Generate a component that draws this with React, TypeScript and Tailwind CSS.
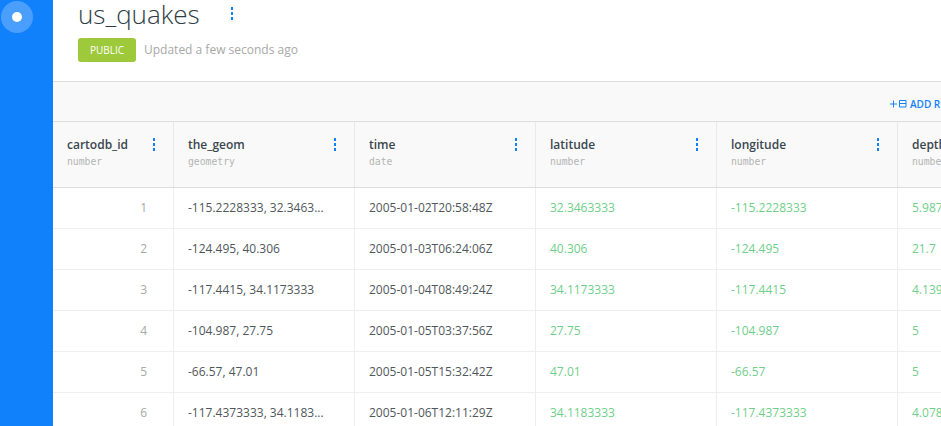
const columns = [
  { name: "cartodb_id", type: "number", w: "w-[121px]" },
  { name: "the_geom", type: "geometry", w: "w-[181px]" },
  { name: "time", type: "date", w: "w-[181px]" },
  { name: "latitude", type: "number", w: "w-[181px]" },
  { name: "longitude", type: "number", w: "w-[181px]" },
  { name: "depth", type: "number", w: "w-[181px]" },
];

const rows = [
  ["1", "-115.2228333, 32.3463...", "2005-01-02T20:58:48Z", "32.3463333", "-115.2228333", "5.987"],
  ["2", "-124.495, 40.306", "2005-01-03T06:24:06Z", "40.306", "-124.495", "21.7"],
  ["3", "-117.4415, 34.1173333", "2005-01-04T08:49:24Z", "34.1173333", "-117.4415", "4.139"],
  ["4", "-104.987, 27.75", "2005-01-05T03:37:56Z", "27.75", "-104.987", "5"],
  ["5", "-66.57, 47.01", "2005-01-05T15:32:42Z", "47.01", "-66.57", "5"],
  ["6", "-117.4373333, 34.1183...", "2005-01-06T12:11:29Z", "34.1183333", "-117.4373333", "4.078"],
];

function Dots() {
  return (
    <div className="flex flex-col gap-[2.5px]">
      <span className="block h-[2.5px] w-[2.5px] bg-[#1181fb]" />
      <span className="block h-[2.5px] w-[2.5px] bg-[#1181fb]" />
      <span className="block h-[2.5px] w-[2.5px] bg-[#1181fb]" />
    </div>
  );
}

export default function App() {
  return (
    <div className="flex h-[426px] w-[941px] overflow-hidden bg-white font-['Open_Sans',sans-serif]">
      <aside className="w-[53px] shrink-0 bg-[#1181fb]">
        <div className="ml-px mt-px flex h-[32px] w-[32px] items-center justify-center rounded-full bg-[#4a9ffc]">
          <span className="block h-[10px] w-[10px] rounded-full bg-white" />
        </div>
      </aside>
      <main className="min-w-0 flex-1">
        <header className="h-[82px] border-b border-[#dddddd] pl-[25px]">
          <div className="flex h-[38px] items-start">
            <h1 className="text-[26px] leading-[28px] font-light text-[#2e3c43]">us_quakes</h1>
            <div className="ml-[31px] mt-[7px]">
              <Dots />
            </div>
          </div>
          <div className="flex items-center">
            <span className="flex h-[24px] w-[58px] items-center justify-center rounded-[3px] bg-[#9dc93a] text-[10px] text-white">
              PUBLIC
            </span>
            <span className="ml-2 text-[12px] text-[#a8a8a8]">Updated a few seconds ago</span>
          </div>
        </header>
        <div className="flex h-[40px] items-center border-b border-[#dddddd] bg-[#f9f9f9] pl-[837px] pt-[5px]">
          <svg width="17" height="8" viewBox="0 0 17 8" className="shrink-0 text-[#1181fb]" fill="none" stroke="currentColor" strokeWidth="1">
            <path d="M0 4h7M3.5 0.5v7" />
            <path d="M9.5 0.5h6.5v6.5h-6.5zM9.5 3.5h6.5" />
          </svg>
          <span className="ml-[3px] whitespace-nowrap text-[10px] font-semibold text-[#1181fb]">ADD ROW</span>
        </div>
        <div className="flex h-[66px] border-b border-[#dddddd] bg-[#f9f9f9]">
          {columns.map((c) => (
            <div key={c.name} className={`${c.w} shrink-0 flex justify-between border-r border-[#e9e9e9] pl-[14px] pr-[18px] pt-[14px]`}>
              <div>
                <div className="text-[12px] leading-[17px] font-semibold text-[#3a474e]">{c.name}</div>
                <div className="mt-[2px] font-['DejaVu_Sans_Mono',monospace] text-[9.75px] leading-[13px] text-[#b4b4b4]">{c.type}</div>
              </div>
              <div className="mt-[2px]">
                <Dots />
              </div>
            </div>
          ))}
        </div>
        {rows.map((r) => (
          <div key={r[0]} className="flex h-[41px] border-b border-[#eeeeee]">
            {r.map((v, i) => (
              <div
                key={i}
                className={`${columns[i].w} shrink-0 flex items-center whitespace-nowrap overflow-hidden border-r border-[#eeeeee] text-[12px] ${
                  i === 0
                    ? "justify-end pr-[26px] text-[#a8a8a8]"
                    : i < 3
                      ? "pl-[14px] text-[#4f575b]"
                      : "pl-[14px] text-[#6fcf8a]"
                }`}
              >
                {v}
              </div>
            ))}
          </div>
        ))}
      </main>
    </div>
  );
}
